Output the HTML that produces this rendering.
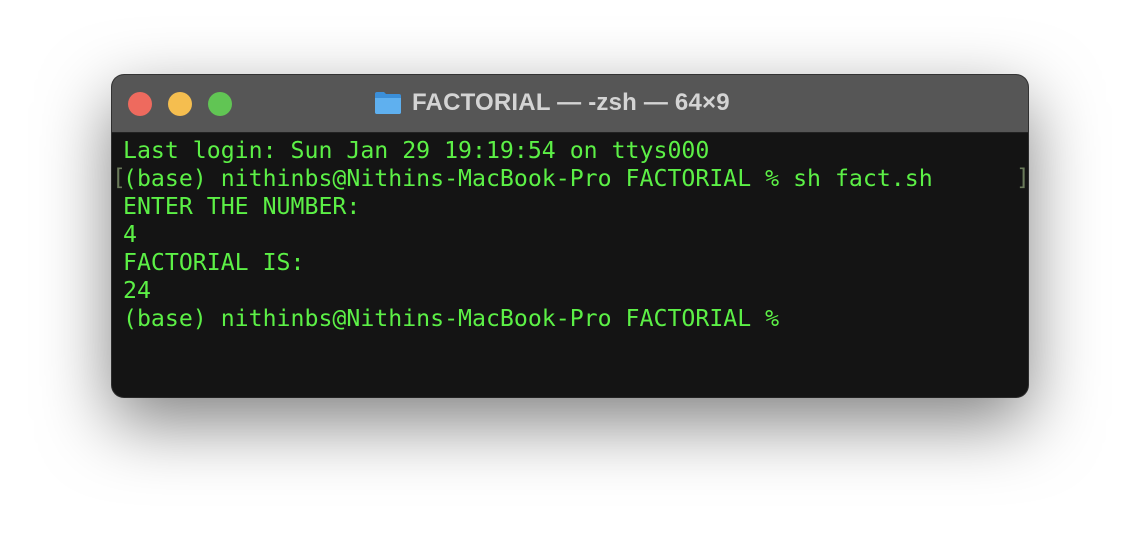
<!DOCTYPE html>
<html><head><style>
html,body{margin:0;padding:0;background:#fff;width:1140px;height:546px;overflow:hidden;}
.win{position:absolute;left:112px;top:75px;width:916px;height:322px;border-radius:12px;background:#141414;
box-shadow:0 25px 70px rgba(0,0,0,0.5),0 0 0 1px #3a3a3a;overflow:hidden;}
.tb{position:absolute;left:0;top:0;width:916px;height:57px;background:#565656;border-bottom:1px solid #222;}
.dot{position:absolute;top:17px;width:24px;height:24px;border-radius:50%;}
.title{position:absolute;left:300px;top:14px;font:bold 24px "Liberation Sans",sans-serif;color:#d4d4d4;letter-spacing:0.2px;}
.folder{position:absolute;left:262px;top:16px;width:28px;height:24px;}
pre{position:absolute;left:11px;top:62px;margin:0;font:23.2px/28px "DejaVu Sans Mono",monospace;color:#5cf046;}
.br{position:absolute;color:#6a7a5a;font:23px "DejaVu Sans Mono",monospace;top:90px;}
</style></head><body>
<div class="win">
<div class="tb">
<div class="dot" style="left:16px;background:#ee6a5e"></div>
<div class="dot" style="left:56px;background:#f5be4f"></div>
<div class="dot" style="left:96px;background:#61c554"></div>
<svg class="folder" viewBox="0 0 28 24"><path d="M1 3 Q1 1 3 1 H10 L12 3 H25 Q27 3 27 5 V21 Q27 23 25 23 H3 Q1 23 1 21Z" fill="#3b8fd9"/><path d="M1 7 H27 V21 Q27 23 25 23 H3 Q1 23 1 21Z" fill="#5fb0ef"/></svg>
<div class="title">FACTORIAL — -zsh — 64×9</div>
</div>
<div class="br" style="left:0px">[</div>
<div class="br" style="left:904px">]</div>
<pre>Last login: Sun Jan 29 19:19:54 on ttys000
(base) nithinbs@Nithins-MacBook-Pro FACTORIAL % sh fact.sh
ENTER THE NUMBER:
4
FACTORIAL IS:
24
(base) nithinbs@Nithins-MacBook-Pro FACTORIAL %</pre>
</div>
</body></html>
